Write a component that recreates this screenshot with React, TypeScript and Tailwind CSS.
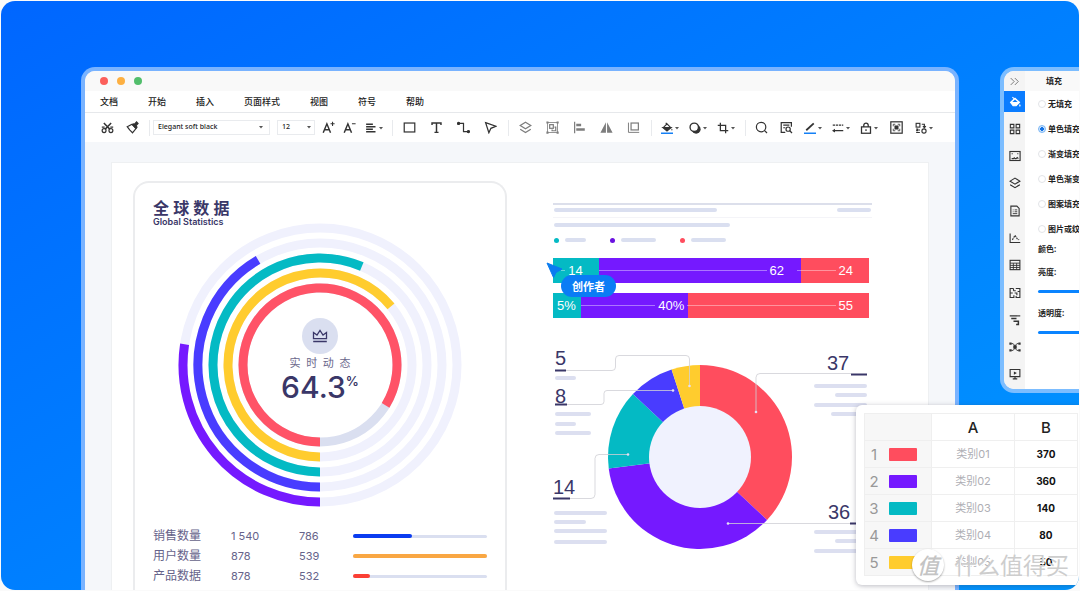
import React from "react";
import clsx from "clsx";

// Types
interface Ring {
  color: string;
  track: string;
  radius: number;
  sweep: number;
}

interface StatRow {
  label: string;
  total: string;
  current: string;
  percent: number;
  color: string;
}

interface Segment {
  label: string;
  percent: number;
  color: string;
  pad: string;
  tail?: string;
}

interface ToolItem {
  name: string;
  label: string;
  muted?: boolean;
  caret?: boolean;
}

const UI_FONT = "font-['Noto_Sans','Noto_Sans_CJK_SC',sans-serif]";
const NUM_FONT = "font-['Inter','Noto_Sans_CJK_SC',sans-serif]";

// Icon drawings, all on a 16x16 grid
const ICONS: Record<string, React.ReactNode> = {
  cut: (
    <>
      <circle cx="3.8" cy="11.8" r="2.4" />
      <circle cx="12.2" cy="11.8" r="2.4" />
      <path d="M3.5 2.5 10.8 10M12.5 2.5 5.2 10" strokeWidth="1.8" />
      <path d="M1 7.5h3.5M11.5 7.5H15" />
    </>
  ),
  brush: (
    <>
      <path d="M1.5 7 7.5 4 12.5 9 8 14.5 6 12.5 4.5 11Z" />
      <path d="M8 4.5 12 9l1.5-1.500-1.200-1.700L14.800 3 13 1.200 10.500 4 9 3.500Z" fill="currentColor" />
    </>
  ),
  fontUp: (
    <>
      <path d="M1.5 14.5 6 3.5l4.5 11M3.2 10.8h5.6" strokeWidth="1.8" />
      <path d="M13 1v5M10.5 3.5h5" strokeWidth="1.3" />
    </>
  ),
  fontDown: (
    <>
      <path d="M1.5 14.5 6 3.5l4.5 11M3.2 10.8h5.6" strokeWidth="1.8" />
      <path d="M11 3.5h4.5" strokeWidth="1.3" />
    </>
  ),
  align: <path d="M1.5 3h9M1.5 6.3H14M1.5 9.6h9M1.5 13H14" strokeWidth="1.8" />,
  rect: <rect x="1.5" y="2.5" width="13" height="11" />,
  text: <path d="M2.5 5V2.5h11V5M8 2.5V14M5.5 14h5" strokeWidth="1.8" />,
  connector: (
    <>
      <path d="M2.5 3h5.5v10h6" />
      <circle cx="2" cy="3" r="1.3" fill="currentColor" />
      <circle cx="14" cy="13" r="1.3" fill="currentColor" />
    </>
  ),
  pointer: <path d="M2 2 14.5 6.5 8.5 9 6 14.5Z" />,
  layers: (
    <>
      <path d="M8 1.5 14.5 5.5 8 9.5 1.5 5.5Z" />
      <path d="M1.5 10.2 8 14.2l6.5-4" />
    </>
  ),
  group: (
    <>
      <rect x="1.8" y="1.8" width="12.4" height="12.4" strokeWidth="1" />
      <rect x="4.5" y="4.5" width="4.5" height="4.5" />
      <path d="M10.5 7.5h1.5V12H7.5v-1.5" />
      <path d="M.5.5h2.600v2.600H.5zM13 .5h2.600v2.600H13zM.5 13h2.600v2.600H.5zM13 13h2.600v2.600H13z" fill="currentColor" stroke="none" />
    </>
  ),
  alignLeft: (
    <>
      <path d="M2 1v14" />
      <path d="M4 3.5h6v3H4zM4 9h10.500v3H4z" fill="currentColor" stroke="none" />
    </>
  ),
  flip: <path d="M7.300 1.500v13H.5zM8.700 1.500v13h6.800z" fill="currentColor" stroke="none" />,
  crossBox: (
    <>
      <rect x="5" y="2.5" width="9" height="8.5" />
      <path d="M1.8 2v12H15" strokeWidth="1.2" />
    </>
  ),
  bucket: (
    <>
      <path d="M6.500 1 8 4M3 7.500 8 2.500l5 5" />
      <path d="M2.500 7.500h11L8 12Z" fill="currentColor" />
      <path d="M14.500 8.500c1 1.500 1 2 0 2.800-1-.8-1-1.300 0-2.800Z" fill="currentColor" stroke="none" />
      <path d="M0 15h16" stroke="#1480f5" strokeWidth="2" />
    </>
  ),
  shadow: (
    <>
      <circle cx="9.500" cy="9.500" r="6" fill="currentColor" stroke="none" />
      <circle cx="7" cy="7" r="5.600" fill="#fff" strokeWidth="1.8" />
    </>
  ),
  crop: <path d="M4.500 1v10.500H15M1 4.500h10.500V15" strokeWidth="1.7" />,
  search: (
    <>
      <circle cx="7.500" cy="7.500" r="5.800" />
      <path d="m11.500 11.500 3.300 3.300" />
    </>
  ),
  find: (
    <>
      <path d="M6.500 14h-5V2H14v5M4 5.200h7.500M4 8.300h2.500" />
      <circle cx="10" cy="10" r="2.600" />
      <path d="m12 12 2.800 2.800" />
    </>
  ),
  pen: (
    <>
      <path d="M3 11 13 1.800" strokeWidth="2.400" />
      <path d="M0 15h16" stroke="#1480f5" strokeWidth="2" />
    </>
  ),
  lines: (
    <>
      <path d="M1 4.200h14" strokeDasharray="3 1" strokeWidth="1.800" />
      <path d="M2 11.500h13" strokeWidth="1.800" />
      <path d="M0 11.500 4 9v5z" fill="currentColor" stroke="none" />
    </>
  ),
  lock: (
    <>
      <rect x="2" y="6.500" width="12" height="8.500" strokeWidth="1.700" />
      <path d="M5 6.500v-2a3 3 0 0 1 6 0v2M8 9.500v2.500" strokeWidth="1.700" />
    </>
  ),
  focus: (
    <>
      <rect x="1" y="1" width="14" height="14" />
      <path d="M4 6.500V4h2.500M9.500 4H12v2.500M12 9.500V12H9.500M6.500 12H4V9.500" strokeWidth="1" />
      <rect x="5.500" y="5.500" width="5" height="5" fill="currentColor" stroke="none" />
    </>
  ),
  shapes: (
    <>
      <rect x="1.500" y="1.800" width="5" height="5" />
      <circle cx="12" cy="12" r="2.800" />
      <path d="M1.500 9.500h2v2h-2M5.500 9.500v2M1.500 14h5M9 3h3.500v4M10.500 5.500l2 2 2-2" />
    </>
  ),
  fill: (
    <>
      <path d="M4.500 1.500 8 4.500" />
      <path d="M2 8.500 8 3l6 5.500L9.500 13h-4Z" fill="currentColor" />
      <path d="M4.500 8h7L8 4.800Z" fill="#0a7cff" stroke="none" />
      <path d="M14.500 10.500c1.300 2 1.300 3 0 3.800-1.300-.8-1.300-1.800 0-3.800Z" fill="currentColor" stroke="none" />
    </>
  ),
  apps: (
    <path d="M1.800 1.800h4.700v4.700H1.800zM9.500 1.800h4.700v4.700H9.500zM1.800 9.500h4.700v4.700H1.800zM9.500 9.500h4.700v4.700H9.500z" />
  ),
  image: (
    <>
      <rect x="1.200" y="2" width="13.600" height="12" />
      <path d="M3.500 11.500H6l1-1 1 1h1.500l1.500-1.500 1.500 1.500" />
      <path d="M3.500 5H5M11 5h1.500" />
    </>
  ),
  doc: (
    <>
      <path d="M2.500 1.500h8l3 3v10h-11Z" />
      <path d="M5 6.500h1M7.500 6.500H11M5 9h1M7.500 9H11M5 11.500h6" strokeWidth="1.200" />
    </>
  ),
  scatter: (
    <>
      <path d="M1.500 2v12H15" />
      <path d="m4.500 10.500 3.500-6 3 4.500 2.500 1.500" strokeDasharray="2.500 1" />
    </>
  ),
  table: (
    <>
      <rect x="1.500" y="1.800" width="13" height="12.400" />
      <path d="M1.500 5.500h13M1.500 8.500h13M1.500 11.300h13M5.800 5.500v8.700M10.200 5.500v8.700" strokeWidth="1.200" />
    </>
  ),
  plan: (
    <path d="M6 2H1.500v12h5v-3M6 2v3M6 5h3M9 2h5.500v12H9.500v-2M1.500 8H5M7.500 8h3v3M11.500 6h3" />
  ),
  gantt: (
    <>
      <path d="M1 2.500h14" />
      <path d="M3 6h7M6 9.500h6.500V14H9.500" strokeWidth="2" />
    </>
  ),
  network: (
    <>
      <path d="M3 3.500h2.500L8 6.500l2.500-3H13M3 12.500h2.500L8 9.500l2.500 3H13" strokeWidth="1.200" />
      <rect x="6.500" y="6.500" width="3" height="3" fill="currentColor" />
      <path d="M.5 2h3v3h-3zM12.500 2h3v3h-3zM.5 11h3v3h-3zM12.500 11h3v3h-3z" fill="currentColor" stroke="none" />
    </>
  ),
  present: (
    <>
      <path d="M1.500 2h13v9.500h-13ZM8 11.500v3M5 14.500h6" />
      <path d="M6.500 4.500V9l4-2.200z" fill="currentColor" stroke="none" />
    </>
  ),
  collapse: <path d="m2.500 3 5 5-5 5M8.500 3l5 5-5 5" strokeWidth="1.400" />,
};

const Icon: React.FC<{ name: string; className?: string }> = ({ name, className }) => (
  <svg
    viewBox="0 0 16 16"
    fill="none"
    stroke="currentColor"
    strokeWidth="1.5"
    aria-hidden="true"
    className={clsx("shrink-0", className)}
  >
    {ICONS[name]}
  </svg>
);

const Caret: React.FC<{ className?: string }> = ({ className }) => (
  <svg viewBox="0 0 6 6" aria-hidden="true" className={clsx("size-[6px] shrink-0", className)}>
    <path d="M1 2h4L3 4.5z" fill="#555" />
  </svg>
);

const menus = ["文档", "开始", "插入", "页面样式", "视图", "符号", "帮助"];

const insertTools: ToolItem[] = [
  { name: "rect", label: "矩形" },
  { name: "text", label: "文本" },
  { name: "connector", label: "连接线" },
  { name: "pointer", label: "选择" },
];

const arrangeTools: ToolItem[] = [
  { name: "layers", label: "图层", muted: true },
  { name: "group", label: "组合", muted: true },
  { name: "alignLeft", label: "左对齐", muted: true },
  { name: "flip", label: "翻转", muted: true },
  { name: "crossBox", label: "尺寸", muted: true },
];

const styleTools: ToolItem[] = [
  { name: "bucket", label: "填充", caret: true },
  { name: "shadow", label: "阴影", caret: true },
  { name: "crop", label: "裁剪", caret: true },
];

const sideTools = [
  "fill",
  "apps",
  "image",
  "layers",
  "doc",
  "scatter",
  "table",
  "plan",
  "gantt",
  "network",
  "present",
];

const fillModes = ["无填充", "单色填充", "渐变填充", "单色渐变填充", "图案填充", "图片或纹理填充"];

const rings: Ring[] = [
  { color: "#7519ff", track: "#f0f1fd", radius: 137, sweep: 98.7 },
  { color: "#493cff", track: "#f0f1fd", radius: 122, sweep: 149.5 },
  { color: "#04bac4", track: "#f0f1fd", radius: 107, sweep: 203 },
  { color: "#ffcc2e", track: "#f0f1fd", radius: 92, sweep: 230.5 },
  { color: "#ff5367", track: "#dadff0", radius: 77, sweep: 301.6 },
];

const stats: StatRow[] = [
  { label: "销售数量", total: "1 540", current: "786", percent: 44, color: "#0a3cf0" },
  { label: "用户数量", total: "878", current: "539", percent: 100, color: "#f9a743" },
  { label: "产品数据", total: "878", current: "532", percent: 13, color: "#fb3f34" },
];

const barRows: Segment[][] = [
  [
    { label: "14", percent: 14.5, color: "bg-[#04bac4]", pad: "pl-2 pr-4" },
    { label: "62", percent: 64, color: "bg-[#7519ff]", pad: "", tail: "w-1 ml-[10px]" },
    { label: "24", percent: 21.5, color: "bg-[#ff4d5e]", pad: "pr-4" },
  ],
  [
    { label: "5%", percent: 8.8, color: "bg-[#04bac4]", pad: "pl-1" },
    { label: "40%", percent: 34, color: "bg-[#7519ff]", pad: "", tail: "w-px" },
    { label: "55", percent: 57.2, color: "bg-[#ff4d5e]", pad: "pr-4" },
  ],
];

const slices = [
  { value: 37, color: "#ff4d5e" },
  { value: 36, color: "#7519ff" },
  { value: 14, color: "#04bac4" },
  { value: 8, color: "#493cff" },
  { value: 5, color: "#ffcc2e" },
];

const sheetRows = [
  { color: "bg-[#ff4d5e]", name: "类别01", value: 370 },
  { color: "bg-[#7519ff]", name: "类别02", value: 360 },
  { color: "bg-[#04bac4]", name: "类别03", value: 140 },
  { color: "bg-[#493cff]", name: "类别04", value: 80 },
  { color: "bg-[#ffcc2e]", name: "类别05", value: 50 },
];

// Point on a circle, angle in degrees clockwise from the top
const polar = (cx: number, cy: number, r: number, deg: number) => {
  const a = ((deg - 90) * Math.PI) / 180;
  return `${(cx + r * Math.cos(a)).toFixed(2)} ${(cy + r * Math.sin(a)).toFixed(2)}`;
};

const ToolButton: React.FC<{ item: ToolItem; width: string }> = ({ item, width }) => (
  <button
    type="button"
    aria-label={item.label}
    className={clsx(
      "flex h-5 shrink-0 items-center justify-center",
      width,
      item.muted ? "text-[#7d7d7d]" : "text-[#333]",
    )}
  >
    <Icon name={item.name} className={item.caret ? "mx-px size-[12px]" : "size-[13px]"} />
    {item.caret && <Caret />}
  </button>
);

const Divider: React.FC = () => (
  <span className="flex w-2 shrink-0 justify-center">
    <span className="h-4 w-px bg-[#e8eaed]" />
  </span>
);

const Toolbar: React.FC = () => (
  <div className="flex h-[29px] items-center bg-white pl-[10px]">
    <ToolButton item={{ name: "cut", label: "剪切" }} width="w-[25px]" />
    <ToolButton item={{ name: "brush", label: "格式刷" }} width="w-[25px]" />
    <Divider />
    <div className="relative w-[117px] shrink-0">
      <select
        aria-label="字体"
        className="block h-[15px] w-full appearance-none border border-[#e9ebee] bg-white pl-1 text-[7px] font-medium text-[#222]"
      >
        <option>Elegant soft black</option>
      </select>
      <Caret className="pointer-events-none absolute right-[6px] top-1" />
    </div>
    <div className="relative ml-[7px] w-[38px] shrink-0">
      <select
        aria-label="字号"
        className="block h-[15px] w-full appearance-none border border-[#e9ebee] bg-white pl-1 text-[7px] font-medium text-[#222]"
      >
        <option>12</option>
      </select>
      <Caret className="pointer-events-none absolute right-[3px] top-1" />
    </div>
    <div className="ml-[3px] flex">
      <ToolButton item={{ name: "fontUp", label: "增大字号" }} width="w-[21px]" />
      <ToolButton item={{ name: "fontDown", label: "减小字号" }} width="w-[21px]" />
      <ToolButton item={{ name: "align", label: "对齐", caret: true }} width="w-7" />
    </div>
    <Divider />
    {insertTools.map((item) => (
      <ToolButton key={item.name} item={item} width="w-[27px]" />
    ))}
    <Divider />
    {arrangeTools.map((item) => (
      <ToolButton key={item.name} item={item} width="w-[27px]" />
    ))}
    <Divider />
    <div className="flex px-px">
      {styleTools.map((item) => (
        <ToolButton key={item.name} item={item} width="w-7" />
      ))}
    </div>
    <Divider />
    <ToolButton item={{ name: "search", label: "搜索" }} width="w-[25px]" />
    <ToolButton item={{ name: "find", label: "查找" }} width="w-[25px]" />
    <ToolButton item={{ name: "pen", label: "线条颜色", caret: true }} width="w-7" />
    <ToolButton item={{ name: "lines", label: "线条样式", caret: true }} width="w-7" />
    <ToolButton item={{ name: "lock", label: "锁定", caret: true }} width="w-7" />
    <ToolButton item={{ name: "focus", label: "聚焦" }} width="w-[27px]" />
    <ToolButton item={{ name: "shapes", label: "替换形状", caret: true }} width="w-7" />
  </div>
);

const RingChart: React.FC = () => (
  <div className="relative mx-auto -mt-1 size-[284px]">
    <svg viewBox="0 0 284 284" fill="none" strokeWidth="9" className="size-full">
      {rings.map((ring) => (
        <g key={ring.radius}>
          <circle cx="142" cy="142" r={ring.radius} stroke={ring.track} />
          <path
            d={`M${polar(142, 142, ring.radius, 180)}A${ring.radius} ${ring.radius} 0 ${
              ring.sweep > 180 ? 1 : 0
            } 1 ${polar(142, 142, ring.radius, 180 + ring.sweep)}`}
            stroke={ring.color}
          />
        </g>
      ))}
    </svg>
    <div className="absolute inset-0 flex flex-col items-center pt-[95px] text-[#3a3768]">
      <span className="flex size-9 items-center justify-center rounded-full bg-[#dadff0]">
        <svg viewBox="0 0 16 16" fill="none" stroke="currentColor" strokeWidth="1.3" className="size-4">
          <path d="M1.5 4.5 5 7l3-4.500L11 7l3.500-2.500v6.200h-13ZM1.200 13.500h13.600" />
        </svg>
      </span>
      <p className="mt-px whitespace-pre text-[11px] leading-4 text-[#6a678c]">实  时  动  态</p>
      <p className={clsx("flex leading-8", NUM_FONT)}>
        <span className="text-[30px] font-medium">64.3</span>
        <span className="text-[13px] font-semibold leading-5">%</span>
      </p>
    </div>
  </div>
);

const StatsCard: React.FC = () => (
  <section className="w-[374px] shrink-0 rounded-t-2xl border-2 border-b-0 border-[#ebecee] px-[18px] pt-4">
    <h2 className="text-[16px] font-bold leading-[18px] text-[#3a3768]">全 球 数 据</h2>
    <p className={clsx("text-[9px] font-semibold leading-[10px] text-[#3a3768]", NUM_FONT)}>
      Global Statistics
    </p>
    <RingChart />
    <table className={clsx("mt-[19px] w-full table-fixed text-left text-[11px] text-[#66638a]", NUM_FONT)}>
      <colgroup>
        <col className="w-[78px]" />
        <col className="w-[68px]" />
        <col className="w-[54px]" />
        <col />
      </colgroup>
      <tbody>
        {stats.map((row) => (
          <tr key={row.label} className="h-5">
            <th scope="row" className="p-0 text-[12px] font-normal leading-5">
              {row.label}
            </th>
            <td className="p-0">{row.total}</td>
            <td className="p-0">{row.current}</td>
            <td className="p-0">
              <div className="flex h-[3px] items-center rounded-full bg-[#dadff0]">
                <div
                  className="h-1 rounded-full"
                  style={{ width: `${row.percent}%`, backgroundColor: row.color }}
                />
              </div>
            </td>
          </tr>
        ))}
      </tbody>
    </table>
  </section>
);

// Text stand-in bars around the donut: x, y, width
const lines = [
  [2, 30, 21],
  [2, 66, 36],
  [2, 76, 21],
  [2, 85, 36],
  [1, 165, 53],
  [1, 174, 32],
  [1, 183, 53],
  [1, 194, 53],
  [261, 38, 53],
  [282, 47, 32],
  [261, 57, 53],
  [278, 66, 36],
  [261, 184, 53],
  [282, 193, 32],
  [261, 203, 53],
];

const DonutChart: React.FC = () => {
  let start = 0;
  return (
    <svg viewBox="0 0 320 210" className="mt-7 w-80 shrink-0" fill="none">
      {slices.map((s) => {
        const from = start;
        start += s.value * 3.6;
        return (
          <path
            key={s.value}
            d={`M${polar(147, 111, 92, from)}A92 92 0 0 1 ${polar(147, 111, 92, start)}L147 111Z`}
            fill={s.color}
          />
        );
      })}
      <circle cx="147" cy="111" r="51" fill="#f0f2fe" />
      <g stroke="#cfd0d6" strokeOpacity="0.8">
        <path d="M2 24.5h57q3.5 0 3.5-3.5v-8q0-3.5 3.5-3.5h67q3.5 0 3.5 3.5v27" />
        <path d="M2 58.5h46q3 0 3-3v-8q0-3 3-3h66" />
        <path d="M1 152.5h37q4 0 4-4v-36q0-4 4-4h29" />
        <path d="M298 27.5h-91q-4 0-4 4v35" />
        <path d="M297 177.5H175" />
      </g>
      <g fill="#e6e0f5">
        <circle cx="136.5" cy="40" r="1.3" />
        <circle cx="120" cy="44.5" r="1.3" />
        <circle cx="75" cy="108.5" r="1.3" />
        <circle cx="203" cy="66" r="1.3" />
        <circle cx="175" cy="177.5" r="1.3" />
      </g>
      <path
        d="M2 24.5h11M2 58.5h12M0 152.5h17M298 28.5h16M297 177.5h16"
        stroke="#3a3768"
        strokeWidth="2"
      />
      {lines.map(([x, y, w]) => (
        <rect key={`${x}-${y}`} x={x} y={y} width={w} height="4" rx="2" fill="#dcdff0" />
      ))}
      <g fill="#3a3768" className="font-['Liberation_Sans',sans-serif] text-[20px]">
        <text x="2" y="19">5</text>
        <text x="2" y="57">8</text>
        <text x="0" y="148">14</text>
        <text x="274" y="24">37</text>
        <text x="275" y="173">36</text>
      </g>
    </svg>
  );
};

const Report: React.FC = () => (
  <section className="ml-[46px] flex min-w-0 flex-1 flex-col pt-[22px]">
    <div className="h-[2px] bg-[#dcdfeb]" />
    <div className="mt-[3px] flex justify-between px-px">
      <div className="h-1 w-[163px] rounded-full bg-[#dadff0]" />
      <div className="h-1 w-[34px] rounded-full bg-[#dadff0]" />
    </div>
    <div className="mt-[5px] h-px bg-[#f4f4f8]" />
    <div className="ml-px mt-[5px] h-1 w-[176px] rounded-full bg-[#dadff0]" />
    <div className="ml-px mt-[10px] flex h-[6px] items-center gap-6">
      <div className="flex items-center gap-[6px]">
        <span className="size-[5px] rounded-full bg-[#04bac4]" />
        <span className="h-1 w-[21px] rounded-full bg-[#dadff0]" />
      </div>
      <div className="flex items-center gap-[6px]">
        <span className="size-[5px] rounded-full bg-[#6a12e0]" />
        <span className="h-1 w-[35px] rounded-full bg-[#dadff0]" />
      </div>
      <div className="flex items-center gap-[6px]">
        <span className="size-[5px] rounded-full bg-[#ff4d5e]" />
        <span className="h-1 w-[35px] rounded-full bg-[#dadff0]" />
      </div>
    </div>
    <div className="relative mr-[3px] mt-[15px] flex flex-col gap-[10px]">
      {barRows.map((row, i) => (
        <div
          key={i}
          className="flex h-[25px] font-['Liberation_Sans',sans-serif] text-[13px] leading-none text-white"
        >
          {row.map((s) => (
            <div
              key={s.label}
              className={clsx("flex shrink-0 items-center gap-[3px]", s.color, s.pad)}
              style={{ width: `${s.percent}%` }}
            >
              {s.label !== "5%" && <span className="h-px flex-1 bg-white/40" />}
              <span>{s.label}</span>
              {s.tail && <span className={clsx("h-px bg-white/40", s.tail)} />}
            </div>
          ))}
        </div>
      ))}
      {/* collaborator cursor */}
      <svg viewBox="0 0 18 18" className="absolute -left-[7px] top-1 size-[18px]" aria-hidden="true">
        <path d="M1 1 16 7 10 10.500 7.500 15.500Z" fill="#0a7cf0" stroke="#0a7cf0" strokeLinejoin="round" />
      </svg>
      <span className="absolute left-2 top-[17px] flex h-[22px] w-[55px] items-center justify-center rounded-full bg-[#0a7cf5] font-['Noto_Sans_CJK_SC',sans-serif] text-[11px] font-bold leading-none text-white">
        创作者
      </span>
    </div>
    <DonutChart />
  </section>
);

const EditorWindow: React.FC = () => (
  <main className="flex min-w-0 flex-1 flex-col rounded-t-[14px] bg-[#79b3ff] px-1 pt-1">
    <div className="flex min-h-0 flex-1 flex-col overflow-hidden rounded-t-[10px] bg-[#f5f7fa]">
      <div className="flex h-5 shrink-0 items-center gap-[9px] bg-[#f9f9f9] pl-[15px]">
        <span className="size-2 rounded-full bg-[#fc605b]" />
        <span className="size-2 rounded-full bg-[#fdb042]" />
        <span className="size-2 rounded-full bg-[#52be6c]" />
      </div>
      <nav className="flex h-[22px] shrink-0 items-center gap-[30px] border-b border-[#e6e8eb] bg-white pl-[15px] text-[9px] font-medium text-[#222]">
        {menus.map((m) => (
          <button key={m} type="button" className="whitespace-nowrap">
            {m}
          </button>
        ))}
      </nav>
      <Toolbar />
      <div className="flex min-h-0 flex-1 px-[26px] pt-5">
        <div className="flex min-w-0 flex-1 border border-b-0 border-[#eef0f2] bg-white pl-[21px] pr-14 pt-[18px]">
          <StatsCard />
          <Report />
        </div>
      </div>
    </div>
  </main>
);

const FillPanel: React.FC = () => (
  <aside className="flex w-[79px] shrink-0 self-start overflow-hidden rounded-l-[14px] bg-[#7cbdff] py-1 pl-1">
    <div className="flex h-[318px] min-w-0 flex-1 overflow-hidden rounded-l-[10px] bg-white">
      <div className="flex w-[21px] shrink-0 flex-col bg-[#f4f4f4] pb-1 text-[#333]">
        <button type="button" aria-label="收起" className="flex h-5 shrink-0 items-center justify-center text-[#777]">
          <Icon name="collapse" className="size-[11px]" />
        </button>
        <div className="flex flex-1 flex-col justify-between">
          {sideTools.map((name, i) => (
            <button
              key={name}
              type="button"
              aria-label={name}
              className={clsx(
                "flex size-[21px] items-center justify-center",
                i === 0 && "bg-[#0a7cff] text-white",
              )}
            >
              <Icon name={name} className="size-[12px]" />
            </button>
          ))}
        </div>
      </div>
      <div className="min-w-0 flex-1 overflow-hidden whitespace-nowrap text-[8px] font-bold text-[#222]">
        <h3 className="h-5 bg-[#f9f9f9] pl-[21px] leading-5">填充</h3>
        <div className="pl-[13px]">
          {fillModes.map((mode) => (
            <label key={mode} className="flex h-[25px] items-center gap-[2px]">
              <input
                type="radio"
                name="fill-mode"
                defaultChecked={mode === "单色填充"}
                className="size-2 shrink-0 appearance-none rounded-full border border-[#e2e4e8] bg-white checked:border-[#7ab6f5] checked:bg-[radial-gradient(circle,#1473e6_40%,#cfe5fc_50%)]"
              />
              {mode}
            </label>
          ))}
          <p className="h-4 leading-4">颜色:</p>
          <label htmlFor="brightness" className="mt-[7px] block h-4 leading-4">
            亮度:
          </label>
          <input
            id="brightness"
            type="range"
            defaultValue={100}
            className="mt-[10px] block h-[3px] w-20 appearance-none rounded-full bg-[#0a84ff]"
          />
          <label htmlFor="opacity" className="mt-3 block h-4 leading-4">
            透明度:
          </label>
          <input
            id="opacity"
            type="range"
            defaultValue={100}
            className="mt-[10px] block h-[3px] w-20 appearance-none rounded-full bg-[#0a84ff]"
          />
        </div>
      </div>
    </div>
  </aside>
);

const DataSheet: React.FC = () => (
  <div className="absolute bottom-[5px] right-0 w-[223px] rounded-l-[6px] bg-white pb-[9px] pl-2 pr-px pt-2 shadow-[0_1px_5px_rgba(60,60,80,0.35)]">
    <table className={clsx("w-full table-fixed border-collapse text-center", NUM_FONT)}>
      <colgroup>
        <col className="w-[67px]" />
        <col className="w-[83px]" />
        <col />
      </colgroup>
      <thead>
        <tr className="h-[27px] text-[15px] leading-none text-[#222]">
          <td className="border border-[#efefef] bg-[#f7f7f7] p-0" />
          <th className="border border-[#efefef] p-0 font-medium">A</th>
          <th className="border border-[#efefef] p-0 font-medium">B</th>
        </tr>
      </thead>
      <tbody>
        {sheetRows.map((row, i) => (
          <tr key={row.name} className="h-[27px] leading-none">
            <th className="border border-[#efefef] bg-[#f7f7f7] p-0 font-normal">
              <span className="flex items-center gap-[10px] pl-1 text-[15px] text-[#999]">
                <span className="w-[10px]">{i + 1}</span>
                <span className={clsx("h-[13px] w-7 rounded-[1px]", row.color)} />
              </span>
            </th>
            <td className="border border-[#efefef] p-0 text-[11px] text-[#aeaeb4]">{row.name}</td>
            <td className="border border-[#efefef] p-0 text-[10px] font-bold text-[#111]">{row.value}</td>
          </tr>
        ))}
      </tbody>
    </table>
    {/* site stamp over the sheet's last row */}
    <div className="absolute bottom-1 right-[10px] flex items-center gap-[10px] text-[#cdcdcd] [text-shadow:1px_1px_0_#fff]">
      <span className="flex size-8 items-center justify-center rounded-full bg-white text-[22px] font-medium italic leading-none text-[#c4c4c4] shadow-[0_1px_2px_rgba(0,0,0,0.35)]">
        值
      </span>
      <span className="text-[23px] leading-8">什么值得买</span>
    </div>
  </div>
);

const App: React.FC = () => {
  return (
    <div className={clsx("h-screen overflow-hidden bg-[#fafafa] p-px", UI_FONT)}>
      <div className="relative flex h-full gap-[41px] overflow-hidden rounded-[14px] bg-linear-to-br from-[#0066ff] to-[#0096ff] pl-20 pt-[66px]">
        <EditorWindow />
        <FillPanel />
        <DataSheet />
      </div>
    </div>
  );
};

export default App;
